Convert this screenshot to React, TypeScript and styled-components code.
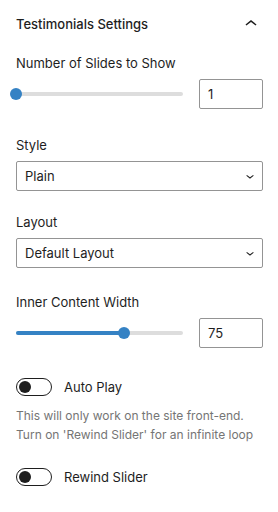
import { useState } from 'react';
import styled, { createGlobalStyle } from 'styled-components';

const GlobalStyle = createGlobalStyle`
  html, body {
    margin: 0;
    padding: 0;
    background: #fff;
  }

  body {
    font-family: Inter, "Liberation Sans", sans-serif;
    color: #1e1e1e;
    -webkit-font-smoothing: antialiased;
  }
`;

const Panel = styled.div`
  width: 278px;
  background: #fff;
`;

const Header = styled.div`
  display: flex;
  align-items: center;
  justify-content: space-between;
  height: 48px;
  padding: 0 15px 0 16px;
  box-sizing: border-box;
  font-size: 13px;
  font-weight: 500;
`;

const Body = styled.div`
  display: flex;
  flex-direction: column;
  padding: 0 15px 0 16px;
`;

const Label = styled.div<{ $top: number }>`
  margin-top: ${(p) => p.$top}px;
  margin-bottom: 8px;
  font-size: 13px;
  line-height: 16px;
`;

const RangeRow = styled.div`
  display: flex;
  align-items: center;
  gap: 16px;
  height: 30px;
`;

const Track = styled.div`
  position: relative;
  flex: 1;
  height: 4px;
  border-radius: 2px;
  background: #dddddd;
`;

const Fill = styled.div`
  position: absolute;
  left: 0;
  top: 0;
  height: 4px;
  border-radius: 2px;
  background: #3582c4;
`;

const Thumb = styled.div`
  position: absolute;
  top: 50%;
  width: 12px;
  height: 12px;
  margin: -6px 0 0 -6px;
  border-radius: 50%;
  background: #3582c4;
`;

const NumberBox = styled.div`
  display: flex;
  align-items: center;
  width: 64px;
  height: 30px;
  box-sizing: border-box;
  padding-left: 8px;
  border: 1px solid #949494;
  border-radius: 2px;
  font-size: 13px;
`;

const Select = styled.div`
  display: flex;
  align-items: center;
  justify-content: space-between;
  height: 30px;
  box-sizing: border-box;
  padding: 0 4px 0 8px;
  border: 1px solid #949494;
  border-radius: 2px;
  font-size: 13px;
`;

const ToggleRow = styled.div<{ $top: number }>`
  display: flex;
  align-items: center;
  gap: 12px;
  margin-top: ${(p) => p.$top}px;
  height: 18px;
  font-size: 13px;
`;

const ToggleTrack = styled.div`
  position: relative;
  width: 36px;
  height: 18px;
  box-sizing: border-box;
  border: 1px solid #1e1e1e;
  border-radius: 9px;
`;

const ToggleThumb = styled.div`
  position: absolute;
  left: 2px;
  top: 2px;
  width: 12px;
  height: 12px;
  border-radius: 50%;
  background: #1e1e1e;
`;

const Help = styled.p`
  margin: 11px 0 0;
  font-size: 12px;
  line-height: 18.5px;
  color: #757575;
`;

const ChevronUp = () => (
  <svg width="24" height="24" viewBox="0 0 24 24" fill="#1e1e1e">
    <path d="M6.5 12.4L12 8l5.5 4.4-.9 1.2L12 10l-4.6 3.6-.9-1.2z" />
  </svg>
);

const ChevronDown = () => (
  <svg width="16" height="16" viewBox="0 0 24 24" fill="#1e1e1e">
    <path d="M17.5 11.6L12 16l-5.5-4.4.9-1.2L12 14l4.6-3.6 1 1.2z" />
  </svg>
);

const RangeControl = ({ value, percent }: { value: number; percent: number }) => (
  <RangeRow>
    <Track>
      <Fill style={{ width: `${percent}%` }} />
      <Thumb style={{ left: `${percent}%` }} />
    </Track>
    <NumberBox>{value}</NumberBox>
  </RangeRow>
);

const Toggle = ({ label, top }: { label: string; top: number }) => (
  <ToggleRow $top={top}>
    <ToggleTrack>
      <ToggleThumb />
    </ToggleTrack>
    {label}
  </ToggleRow>
);

export default function App() {
  const [open] = useState(true);

  return (
    <Panel>
      <GlobalStyle />
      <Header>
        Testimonials Settings
        <ChevronUp />
      </Header>
      {open && (
        <Body>
          <Label $top={7}>Number of Slides to Show</Label>
          <RangeControl value={1} percent={0} />

          <Label $top={28}>Style</Label>
          <Select>
            Plain
            <ChevronDown />
          </Select>

          <Label $top={23}>Layout</Label>
          <Select>
            Default Layout
            <ChevronDown />
          </Select>

          <Label $top={26}>Inner Content Width</Label>
          <RangeControl value={75} percent={64.5} />

          <Toggle label="Auto Play" top={30} />
          <Help>
            This will only work on the site front-end.
            <br />
            Turn on 'Rewind Slider' for an infinite loop
          </Help>
          <Toggle label="Rewind Slider" top={24} />
        </Body>
      )}
    </Panel>
  );
}
